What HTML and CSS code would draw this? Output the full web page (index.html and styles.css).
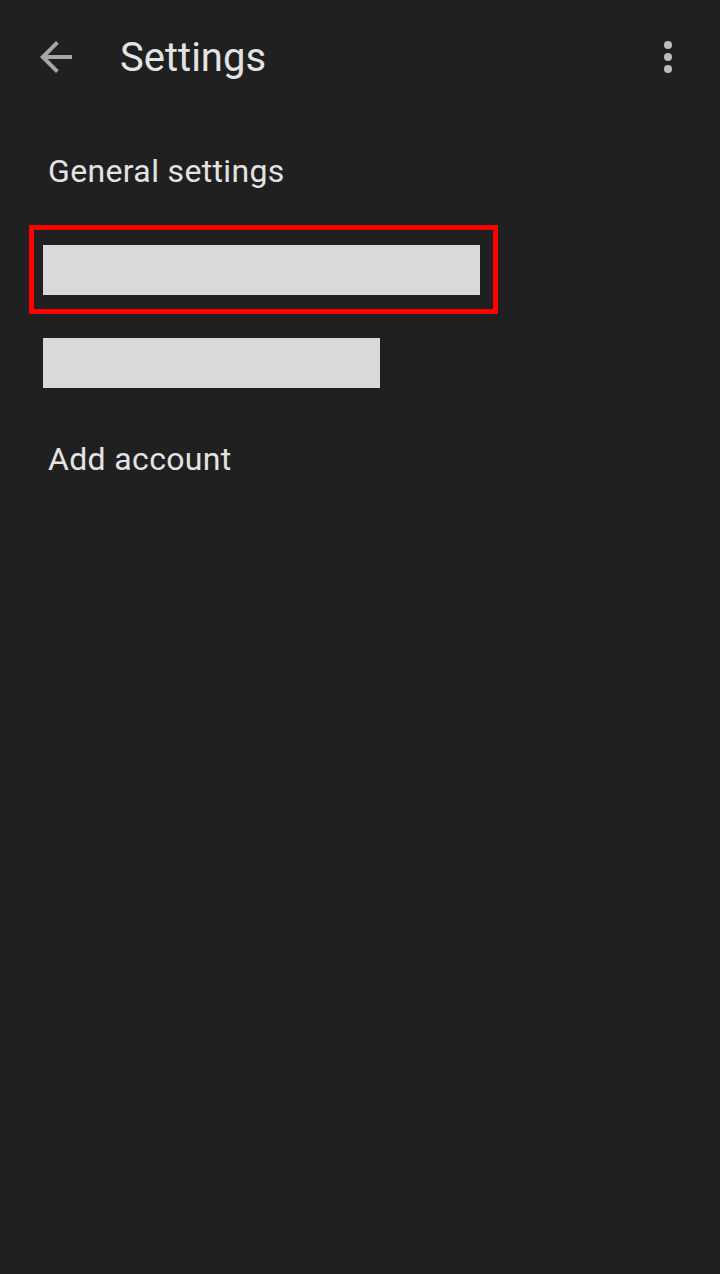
FILE: index.html
```html
<!DOCTYPE html>
<html>
<head>
<meta charset="utf-8">
<link rel="stylesheet" href="styles.css">
</head>
<body>
<div class="screen">
  <header class="topbar">
    <svg class="back" viewBox="0 0 24 24" width="48" height="48"><path d="M20 11H7.83l5.59-5.59L12 4l-8 8 8 8 1.41-1.41L7.83 13H20v-2z" fill="currentColor"/></svg>
    <h1 class="title">Settings</h1>
    <div class="menu"><span class="dot"></span><span class="dot"></span><span class="dot"></span></div>
  </header>
  <div class="list">
    <div class="item label">General settings</div>
    <div class="item highlight"><div class="bar bar-long"></div></div>
    <div class="item"><div class="bar bar-short"></div></div>
    <div class="item label">Add account</div>
  </div>
</div>
</body>
</html>
```
FILE: styles.css
```css
html, body { margin: 0; padding: 0; }
body {
  background: #202020;
  font-family: Roboto, "Open Sans", sans-serif;
  color: #e3e3e3;
}
.screen { width: 720px; height: 1274px; background: #202020; }
.topbar {
  display: flex;
  align-items: center;
  height: 114px;
  padding: 0 48px 0 32px;
  box-sizing: border-box;
}
.back { color: #a6a6a6; display: block; }
.title {
  margin: 0 0 0 40px;
  font-size: 40px;
  font-weight: 400;
  color: #e3e3e3;
  flex: 1;
}
.menu {
  display: flex;
  flex-direction: column;
  gap: 4px;
  align-items: center;
}
.dot { width: 8px; height: 8px; border-radius: 50%; background: #bdbdbd; }
.list { display: flex; flex-direction: column; }
.label {
  font-size: 32px;
  letter-spacing: 0.35px;
  padding-left: 48px;
}
.item.label:first-child { margin-top: 37px; height: 40px; line-height: 40px; }
.highlight {
  margin: 34px 0 0 29px;
  width: 469px;
  height: 89px;
  border: 5px solid #ff0000;
  box-sizing: border-box;
  padding: 15px 0 0 9px;
}
.bar { height: 50px; background: #d9d9d9; }
.bar-long { width: 437px; }
.bar-short { width: 337px; margin: 24px 0 0 43px; }
.item.label:last-child { margin-top: 51px; height: 40px; line-height: 40px; }
```
